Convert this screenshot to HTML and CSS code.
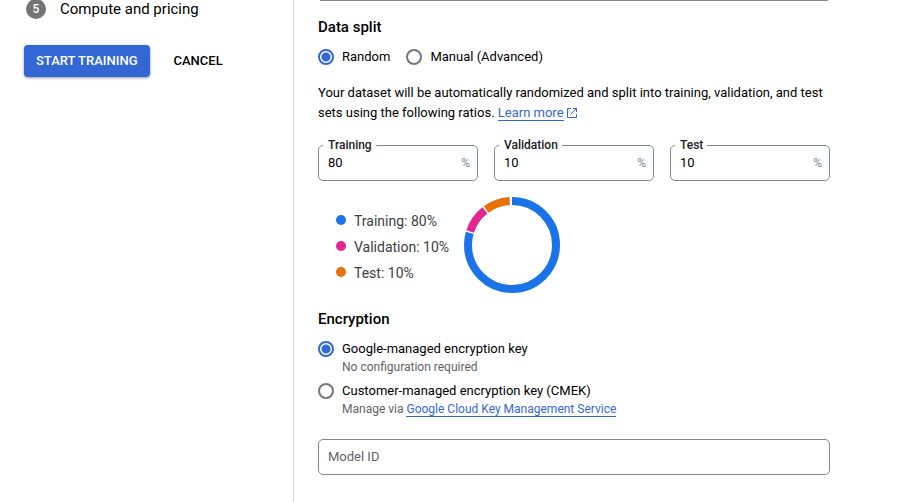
FILE: index.html
```html
<!DOCTYPE html>
<html lang="en">
<head>
<meta charset="utf-8">
<meta name="viewport" content="width=device-width, initial-scale=1">
<title>Train new model</title>
<link rel="stylesheet" href="styles.css">
</head>
<body>
<div class="page">
  <aside class="sidebar">
    <div class="step">
      <span class="step-number">5</span>
      <span class="step-title">Compute and pricing</span>
    </div>
    <div class="actions">
      <button class="button button-primary" type="button">Start training</button>
      <button class="button" type="button">Cancel</button>
    </div>
  </aside>
  <main class="content">
    <div class="panel-edge"></div>
    <section class="split">
      <h2>Data split</h2>
      <div class="radio-row">
        <label class="radio"><input type="radio" name="split" checked>Random</label>
        <label class="radio"><input type="radio" name="split">Manual (Advanced)</label>
      </div>
      <p class="description">Your dataset will be automatically randomized and split into training, validation, and test sets using the following ratios. <a href="#">Learn more</a><svg class="external" viewBox="0 0 10 10" aria-hidden="true"><path d="M4 .5H.5v9h9V6M6 .5h3.5V4M9.5 .5l-6 6"/></svg></p>
      <div class="ratios">
        <fieldset class="field">
          <legend><label for="training">Training</label></legend>
          <input id="training" type="text" value="80"><span class="unit">%</span>
        </fieldset>
        <fieldset class="field">
          <legend><label for="validation">Validation</label></legend>
          <input id="validation" type="text" value="10"><span class="unit">%</span>
        </fieldset>
        <fieldset class="field">
          <legend><label for="test">Test</label></legend>
          <input id="test" type="text" value="10"><span class="unit">%</span>
        </fieldset>
      </div>
      <div class="chart">
        <ul class="chart-legend">
          <li class="blue">Training: 80%</li>
          <li class="pink">Validation: 10%</li>
          <li class="orange">Test: 10%</li>
        </ul>
        <svg class="donut" viewBox="0 0 96 96" aria-hidden="true">
          <g transform="rotate(-90 48 48)">
            <circle class="arc-blue" cx="48" cy="48" r="44" pathLength="360" stroke-dasharray="286 74"/>
            <circle class="arc-pink" cx="48" cy="48" r="44" pathLength="360" stroke-dasharray="34 326" stroke-dashoffset="-288"/>
            <circle class="arc-orange" cx="48" cy="48" r="44" pathLength="360" stroke-dasharray="33 327" stroke-dashoffset="-324"/>
          </g>
        </svg>
      </div>
    </section>
    <section class="encryption">
      <h2>Encryption</h2>
      <label class="radio"><input type="radio" name="key" checked>Google-managed encryption key</label>
      <p class="hint">No configuration required</p>
      <label class="radio"><input type="radio" name="key">Customer-managed encryption key (CMEK)</label>
      <p class="hint">Manage via <a href="#">Google Cloud Key Management Service</a></p>
    </section>
    <input class="model-id" type="text" placeholder="Model ID" aria-label="Model ID">
  </main>
</div>
</body>
</html>
```
FILE: styles.css
```css
* { box-sizing: border-box; }

body {
  margin: 0;
  background: #fff;
  color: #000;
  font: 13px/20px Roboto, sans-serif;
}

.page { display: flex; min-height: 100vh; }

.sidebar {
  flex: 0 0 294px;
  padding: 0 24px;
  border-right: 1px solid #dadce0;
}

.step { display: flex; align-items: center; height: 18px; padding-left: 2px; font-size: 15px; }

.step-number {
  flex: none;
  width: 20px;
  margin-right: 14px;
  border-radius: 50%;
  background: #757575;
  color: #fff;
  font-size: 12px;
  font-weight: 500;
  text-align: center;
}

.actions { display: flex; gap: 12px; margin-top: 27px; }

.button {
  height: 32px;
  padding: 0 12px;
  border: 0;
  border-radius: 4px;
  background: none;
  color: #000;
  font: 500 13px/32px Roboto, sans-serif;
  text-transform: uppercase;
}

.button-primary {
  background: #3367d6;
  color: #fff;
  box-shadow: 0 1px 3px rgba(0, 0, 0, .4);
}

.content { flex: 1; max-width: 560px; padding: 0 24px; }

.panel-edge { height: 1px; margin: 0 2px; background: #80868b; }

h2 { margin: 0; font-size: 15px; line-height: 20px; font-weight: 500; }

.split { padding-top: 16px; }

.radio-row { display: flex; gap: 16px; margin-top: 10px; }

.radio { display: flex; align-items: center; gap: 8px; }

.radio input {
  appearance: none;
  flex: none;
  width: 16px;
  height: 16px;
  margin: 0;
  border: 2px solid #757575;
  border-radius: 50%;
}

.radio input:checked {
  border-color: #3367d6;
  background: radial-gradient(circle, #3367d6 4px, #fff 5px);
}

a {
  border-bottom: 1px solid #3367d6;
  color: #3367d6;
  text-decoration: none;
}

.description { margin: 16px 0 0; }

.external {
  width: 10px;
  height: 10px;
  margin-left: 3px;
  vertical-align: -1px;
  fill: none;
  stroke: #3367d6;
}

.ratios { display: flex; gap: 16px; margin-top: 14px; }

.field {
  display: flex;
  align-items: center;
  flex: 1;
  min-width: 0;
  height: 44px;
  margin: 0;
  padding: 0 7px 8px 4px;
  border: 1px solid #80868b;
  border-radius: 5px;
}

.field legend {
  padding: 0 4px 0 5px;
  color: #202124;
  font-size: 12px;
  line-height: 16px;
  font-weight: 500;
}

.field input {
  flex: 1;
  min-width: 0;
  padding: 0 5px;
  border: 0;
  background: none;
  color: #000;
  font: 13px/20px Roboto, sans-serif;
}

.unit { color: #80868b; font-size: 12px; }

.chart { display: flex; align-items: center; margin-top: 16px; padding-left: 18px; }

.chart-legend {
  width: 128px;
  margin: 0;
  padding: 4px 0 0;
  color: #3c4043;
  font-size: 14px;
  line-height: 26px;
  list-style: none;
}

.chart-legend li { display: flex; align-items: center; gap: 8px; }

.chart-legend li::before {
  content: "";
  width: 10px;
  height: 10px;
  margin-bottom: 2px;
  border-radius: 50%;
  background: currentColor;
}

.chart-legend .blue::before { background: #1a73e8; }
.chart-legend .pink::before { background: #e52592; }
.chart-legend .orange::before { background: #e8710a; }

.donut { width: 96px; height: 96px; fill: none; stroke-width: 8; }

.arc-blue { stroke: #1a73e8; }
.arc-pink { stroke: #e52592; }
.arc-orange { stroke: #e8710a; }

.encryption { margin-top: 16px; }

.encryption h2 { margin-bottom: 10px; }

.hint {
  margin: 0 0 6px 24px;
  color: #5f6368;
  font-size: 12px;
  line-height: 16px;
}

.model-id {
  width: 100%;
  height: 36px;
  margin-top: 16px;
  padding: 0 9px 2px;
  border: 1px solid #80868b;
  border-radius: 5px;
  background: none;
  font: 13px/20px Roboto, sans-serif;
}

.model-id::placeholder { color: #5f6368; }
```
